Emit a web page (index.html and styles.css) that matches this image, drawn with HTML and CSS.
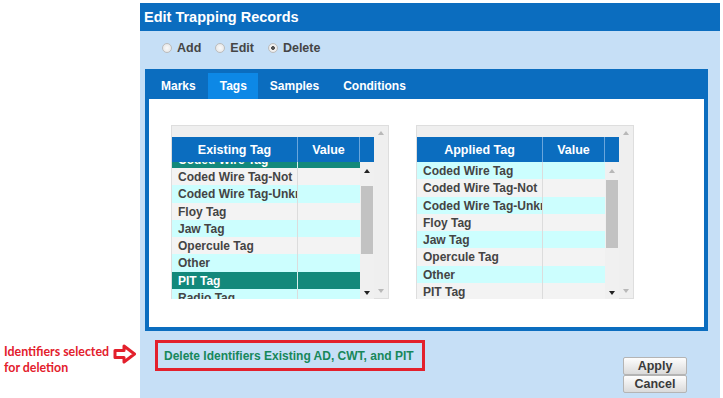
FILE: index.html
```html
<!DOCTYPE html>
<html lang="en">
<head>
  <meta charset="utf-8">
  <title>Edit Trapping Records</title>
  <link rel="stylesheet" href="styles.css">
</head>
<body>

<div class="page">

  <!-- ───────── callout ───────── -->
  <aside class="note">
    <p class="note-text">Identifiers selected<br>for deletion</p>
    <svg class="note-arrow" width="24" height="20" viewBox="0 0 24 20">
      <path d="M2 6.5 H11 V2 L21.5 10 L11 18 V13.5 H2 Z" fill="#fff" stroke="#e3202c" stroke-width="3" stroke-linejoin="round"/>
    </svg>
  </aside>

  <!-- ───────── dialog ───────── -->
  <main class="dialog">
    <h1 class="dialog-title">Edit Trapping Records</h1>

    <div class="mode">
      <label><input type="radio" name="mode"> Add</label>
      <label><input type="radio" name="mode"> Edit</label>
      <label><input type="radio" name="mode" checked> Delete</label>
    </div>

    <section class="tabs">
      <nav class="tab-bar">
        <span class="tab">Marks</span>
        <span class="tab active">Tags</span>
        <span class="tab">Samples</span>
        <span class="tab">Conditions</span>
      </nav>

      <div class="tab-body">

        <div class="list-box">
          <div class="list-main">
            <div class="list-head"><span>Existing Tag</span><span>Value</span><span></span></div>
            <div class="list-body">
              <div class="rows scrolled">
                <div class="row sel"><span>Coded Wire Tag</span><span></span></div>
                <div class="row"><span>Coded Wire Tag-Not</span><span></span></div>
                <div class="row"><span>Coded Wire Tag-Unknown</span><span></span></div>
                <div class="row"><span>Floy Tag</span><span></span></div>
                <div class="row"><span>Jaw Tag</span><span></span></div>
                <div class="row"><span>Opercule Tag</span><span></span></div>
                <div class="row"><span>Other</span><span></span></div>
                <div class="row sel"><span>PIT Tag</span><span></span></div>
                <div class="row"><span>Radio Tag</span><span></span></div>
              </div>
              <div class="vbar">
                <i class="arr up"></i>
                <div class="track"><b class="thumb low"></b></div>
                <i class="arr down"></i>
              </div>
            </div>
          </div>
          <div class="outer-bar"><i class="arr up dim"></i><i class="arr down dim"></i></div>
        </div>

        <div class="list-box">
          <div class="list-main">
            <div class="list-head"><span>Applied Tag</span><span>Value</span><span></span></div>
            <div class="list-body">
              <div class="rows">
                <div class="row"><span>Coded Wire Tag</span><span></span></div>
                <div class="row"><span>Coded Wire Tag-Not</span><span></span></div>
                <div class="row"><span>Coded Wire Tag-Unknown</span><span></span></div>
                <div class="row"><span>Floy Tag</span><span></span></div>
                <div class="row"><span>Jaw Tag</span><span></span></div>
                <div class="row"><span>Opercule Tag</span><span></span></div>
                <div class="row"><span>Other</span><span></span></div>
                <div class="row"><span>PIT Tag</span><span></span></div>
              </div>
              <div class="vbar">
                <i class="arr up dim"></i>
                <div class="track"><b class="thumb"></b></div>
                <i class="arr down"></i>
              </div>
            </div>
          </div>
          <div class="outer-bar"><i class="arr up dim"></i><i class="arr down dim"></i></div>
        </div>

      </div>
    </section>

    <footer class="dialog-foot">
      <p class="notice">Delete Identifiers Existing AD, CWT, and PIT</p>
      <div class="actions">
        <button>Apply</button>
        <button>Cancel</button>
      </div>
    </footer>
  </main>

</div>

</body>
</html>
```

FILE: styles.css
```css
:root {font-family: "Liberation Sans", Arial, sans-serif;}
body  {margin:0;background:#fff;color:#444}
.page {display:flex;align-items:flex-start;height:398px;overflow:hidden}

/* callout on the left */
.note       {width:140px;flex:none;display:flex;align-items:flex-start;
             padding:344px 0 0 4px;box-sizing:border-box}
.note-text  {margin:0;font:700 12.4px/16px Lato, "Open Sans", sans-serif;
             color:#e3202c;white-space:nowrap}
.note-arrow {margin:0 0 0 4px;flex:none}

/* dialog */
.dialog       {width:580px;height:395px;margin-top:3px;background:#c6dff6}
.dialog-title {margin:0;height:28px;padding-left:4px;background:#0b6dbf;
               color:#fff;font-size:14.5px;line-height:28px}

.mode        {display:flex;height:38px;align-items:center;padding:0 0 5px 22px;
              box-sizing:border-box;font-size:12.5px;font-weight:700;color:#454545}
.mode label  {display:flex;align-items:center;margin-right:13px}
.mode label + label {margin-left:1px}
.mode input  {appearance:none;margin:0 5px 0 0;width:10px;height:10px;border-radius:50%;
              border:1px solid #bcbcbc;background:radial-gradient(#fafafa,#e2e2e2);
              box-sizing:border-box}
.mode input:checked {background:radial-gradient(#555 0 1.6px,#f2f2f2 2.2px,#e2e2e2)}

/* tab frame */
.tabs     {margin:0 12px 0 5px;border:4px solid #0b6dbf;border-top:0;background:#fff}
.tab-bar  {display:flex;align-items:flex-end;height:30px;background:#0b6dbf;margin:0 -1px}
.tab      {height:26px;line-height:26px;padding:0 12px;color:#fff;font-size:12px;font-weight:700}
.tab:first-child {padding-left:13px}
.tab.active {background:#0d88e6;padding:0 11px 0 12px}
.tab-body {display:flex;gap:27px;height:228px;padding:26px 0 0 22px;box-sizing:border-box}

/* list boxes */
.list-box  {display:flex;width:218px;height:174px;border:1px solid #dedede;
            background:#efefef;box-sizing:border-box}
.list-main {width:202px;padding-top:11px}
.list-head {display:grid;grid-template-columns:126px 62px 1fr;height:25px;background:#0b6dbf}
.list-head span {color:#fff;font-size:12.5px;font-weight:700;line-height:26px;text-align:center;
                 border-right:1px solid #6aa6dc}
.list-head span:last-child {border:0}
.list-body {display:flex;height:137px}
.rows      {width:188px;overflow:hidden}
.rows.scrolled .row:first-child {margin-top:-11.3px}
.row       {display:grid;grid-template-columns:126px 62px;height:17.3px;line-height:18px;
            font-size:12px;font-weight:700;color:#444}
.row span  {overflow:hidden;white-space:nowrap;padding-left:6px;border-right:1px solid #dcdcdc}
.row span:last-child {border:0}
.row:nth-child(odd)  {background:#ccfefe}
.row:nth-child(even) {background:#f3f3f3}
.row.sel   {background:#13897b;color:#fff}
.row.sel span {border-color:#d8efec}

/* scrollbars */
.vbar   {width:14px;display:flex;flex-direction:column;background:#f0f0f0}
.vbar .arr {margin:7px auto 4px}
.vbar .arr.down {margin:4px auto 4px}
.track  {flex:1}
.thumb  {display:block;margin:3px 1px 0;height:68px;background:#c2c2c2}
.thumb.low {margin-top:9px}
.outer-bar {flex:1;display:flex;flex-direction:column;justify-content:space-between;
            align-items:center;padding:5px 0 5px}

.arr      {display:block;width:0;height:0;border:3.5px solid transparent}
.arr.up   {border-top:0;border-bottom:4px solid #222}
.arr.down {border-bottom:0;border-top:4px solid #222}
.arr.up.dim   {border-bottom-color:#b8b8b8}
.arr.down.dim {border-top-color:#b8b8b8}

/* footer */
.dialog-foot {display:flex;justify-content:space-between;align-items:flex-start;
              padding:9px 33px 0 15px}
.notice   {margin:0;height:31px;padding:0 8px 0 6px;line-height:26px;border:3px solid #e3202c;
           box-sizing:border-box;color:#17875a;font-size:12px;font-weight:700}
.actions  {display:flex;flex-direction:column;margin-top:17px}
.actions button {width:64px;height:18px;padding:0;border:1px solid #b4b4b4;border-radius:2px;
                 background:linear-gradient(#fdfdfd,#dadada);color:#3a3a3a;
                 font:700 12.5px "Liberation Sans", Arial, sans-serif}
```
